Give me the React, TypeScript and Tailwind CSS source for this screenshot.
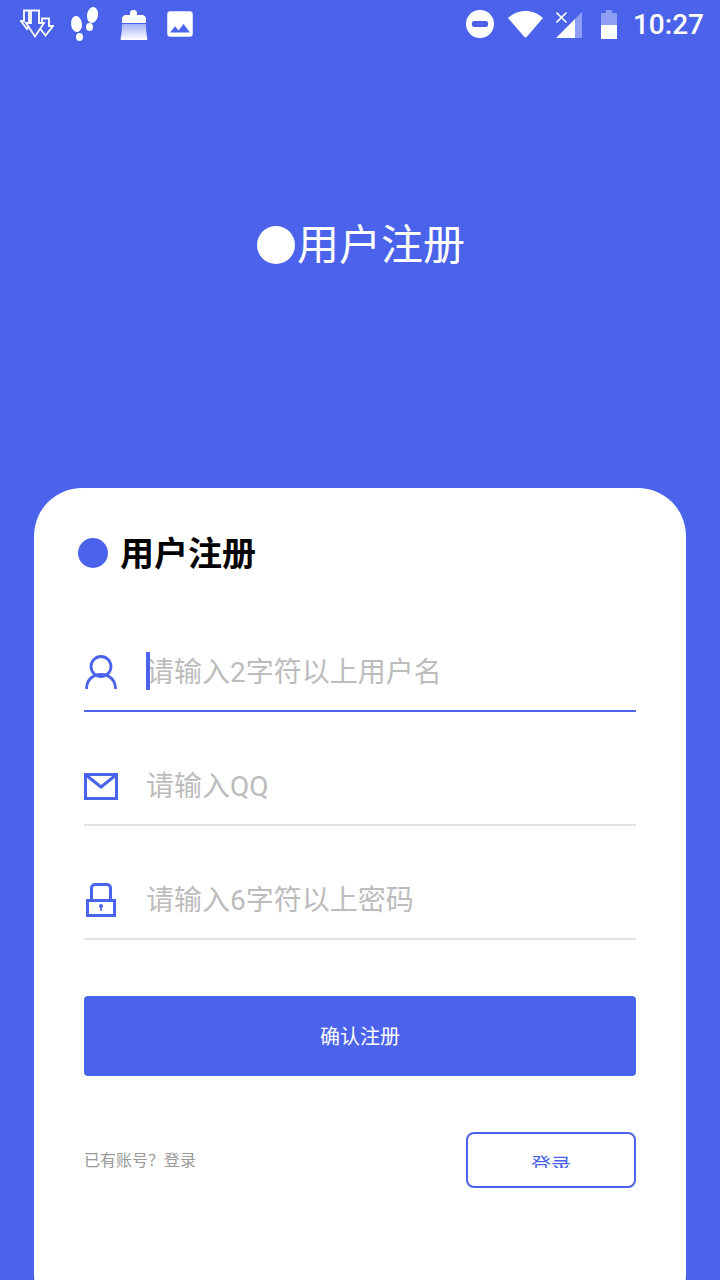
import type { ReactNode } from "react";
import { MdImage } from "react-icons/md";

function DownloadIcon() {
  return (
    <svg width="34" height="30" viewBox="0 0 34 30" fill="#4b63eb" stroke="white" strokeWidth="1.8" strokeLinejoin="miter">
      <path d="M4 1.500h5V12h4L7 20 1 12h3z" />
      <path d="M25 9.500h-3v7.500h-4l7.500 9.500 7.500-9.500h-4V9.500z" />
      <path d="M11 1.500h8V14h5l-9 13.500L6 14h5z" />
    </svg>
  );
}

function StepsIcon() {
  return (
    <svg width="30" height="36" viewBox="0 0 30 36" fill="white">
      <ellipse cx="6.500" cy="18" rx="5.500" ry="8" transform="rotate(-6 6.500 18)" />
      <ellipse cx="9.500" cy="31" rx="3.500" ry="4" />
      <ellipse cx="22.500" cy="9" rx="5.500" ry="8" transform="rotate(10 22.500 9)" />
      <ellipse cx="19.500" cy="21" rx="3.500" ry="4" />
    </svg>
  );
}

function BroomIcon() {
  return (
    <svg width="28" height="30" viewBox="0 0 28 30">
      <defs>
        <linearGradient id="brush" x1="0" y1="0" x2="0" y2="1">
          <stop offset="0" stopColor="#a3aff7" />
          <stop offset="1" stopColor="#ffffff" />
        </linearGradient>
      </defs>
      <path d="M10 3a3.500 3 0 0 1 7 0v2h5c2.500 0 4 2 4 4v4H2V9c0-2 1.500-4 4-4h4z" fill="white" />
      <path d="M2 14h24c0 5 .3 10 1.500 15a1 1 0 0 1-1 1h-25a1 1 0 0 1-1-1C1.700 24 2 19 2 14z" fill="url(#brush)" />
    </svg>
  );
}

function DndIcon() {
  return (
    <svg width="28" height="28" viewBox="0 0 28 28">
      <circle cx="14" cy="14" r="14" fill="white" />
      <rect x="6" y="11" width="16" height="6" rx="2" fill="#4b63eb" />
    </svg>
  );
}

function WifiIcon() {
  return (
    <svg width="35" height="27" viewBox="0 0 35 27" fill="white">
      <path d="M0 7C5 2.500 11 0 17.500 0S30 2.500 35 7L19 25.500a2 2 0 0 1-3 0z" />
    </svg>
  );
}

function SignalIcon() {
  return (
    <svg width="27" height="26" viewBox="0 0 27 26">
      <path d="M26 0v26h-7V7z" fill="#8f9ef5" />
      <path d="M19 7v19H0z" fill="white" />
      <path d="M.500.500l10 10M10.500.500l-10 10" stroke="white" strokeWidth="1.600" />
    </svg>
  );
}

function BatteryIcon() {
  return (
    <svg width="16" height="29" viewBox="0 0 16 29">
      <path d="M5 0h6v3h5v12H0V3h5z" fill="#8f9ef5" />
      <rect x="0" y="15" width="16" height="14" fill="white" />
    </svg>
  );
}

function UserIcon() {
  return (
    <svg className="mb-[2px] ml-px" width="32" height="34" viewBox="0 0 32 34" fill="none" stroke="#4b63eb" strokeWidth="2.800">
      <circle cx="16" cy="11.500" r="10" />
      <path d="M1.500 34c0-9 6-14.500 14.500-14.500S30.500 25 30.500 34" />
    </svg>
  );
}

function MailIcon() {
  return (
    <svg className="mb-[2px]" width="34" height="27" viewBox="0 0 34 27" fill="none" stroke="#4b63eb" strokeWidth="3">
      <rect x="1.500" y="1.500" width="31" height="24" />
      <path d="M2 2l15 12L32 2" />
    </svg>
  );
}

function LockIcon() {
  return (
    <svg className="mb-[2px] ml-[2px]" width="30" height="34" viewBox="0 0 30 34" fill="none" stroke="#4b63eb" strokeWidth="3">
      <path d="M5.500 17V5a3.500 3.500 0 0 1 3.500-3.500h12A3.500 3.500 0 0 1 24.500 5v12" />
      <rect x="1.500" y="17.500" width="27" height="15" />
      <circle cx="15" cy="23" r="2" fill="#4b63eb" stroke="none" />
      <rect x="14.200" y="23" width="1.600" height="5" fill="#4b63eb" stroke="none" />
    </svg>
  );
}

function Field({ icon, text, active }: { icon: ReactNode; text: string; active?: boolean }) {
  return (
    <div className="flex h-[114px] items-end">
      <div
        className={`flex h-[76px] w-full items-center border-b-2 ${
          active ? "border-[#4b63eb]" : "border-[#e2e2e2]"
        }`}
      >
        <div className="flex w-[62px] shrink-0 items-center">{icon}</div>
        <div className="flex h-[38px] items-center">
          {active && <div className="relative -top-[2px] -mr-1 h-[38px] w-1 bg-[#4b63eb]" />}
          <span className="text-[28px] leading-none text-[#bcbcbc]">{text}</span>
        </div>
      </div>
    </div>
  );
}

export default function App() {
  return (
    <div
      className="flex h-[1280px] w-[720px] flex-col overflow-hidden bg-[#4b63eb] text-white"
      style={{ fontFamily: "Roboto, 'Noto Sans CJK SC', sans-serif" }}
    >
      <div className="flex h-12 shrink-0 items-center justify-between pl-5 pr-4">
        <div className="flex items-center">
          <DownloadIcon />
          <div className="ml-4">
            <StepsIcon />
          </div>
          <div className="ml-5 mt-[1px]">
            <BroomIcon />
          </div>
          <MdImage className="ml-[15px] text-[34px]" />
        </div>
        <div className="flex items-center">
          <DndIcon />
          <div className="ml-[14px]">
            <WifiIcon />
          </div>
          <div className="ml-[13px] mt-[2px]">
            <SignalIcon />
          </div>
          <div className="ml-[18px]">
            <BatteryIcon />
          </div>
          <span className="ml-4 mt-[2px] text-[28px] font-medium leading-none">10:27</span>
        </div>
      </div>

      <div className="flex h-[394px] shrink-0 items-center justify-center pl-[2px]">
        <div className="h-[38px] w-[38px] rounded-full bg-white" />
        <span className="ml-[2px] mt-[2px] text-[42px] leading-none">用户注册</span>
      </div>

      <div className="mx-[34px] mt-[46px] h-[834px] shrink-0 rounded-[48px] bg-white px-[50px] pt-[45px]">
        <div className="-ml-[6px] flex h-10 items-center">
          <div className="h-[30px] w-[30px] rounded-full bg-[#4b63eb]" />
          <span className="ml-3 mt-[2px] text-[34px] font-bold leading-none text-black">用户注册</span>
        </div>

        <div className="mt-[25px]">
          <Field icon={<UserIcon />} text="请输入2字符以上用户名" active />
          <Field icon={<MailIcon />} text="请输入QQ" />
          <Field icon={<LockIcon />} text="请输入6字符以上密码" />
        </div>

        <button className="mt-[56px] flex h-20 w-full items-center justify-center rounded bg-[#4b63eb] pt-[2px] text-xl text-white">
          确认注册
        </button>

        <div className="mt-14 flex items-center justify-between">
          <span className="pt-[2px] text-base text-[#999999]">已有账号？登录</span>
          <button className="flex h-14 w-[170px] justify-center overflow-hidden rounded-lg border-2 border-[#4b63eb] bg-white">
            <span className="mt-[18px] h-[16px] overflow-hidden text-xl leading-7 text-[#4b63eb]">登录</span>
          </button>
        </div>
      </div>
    </div>
  );
}
